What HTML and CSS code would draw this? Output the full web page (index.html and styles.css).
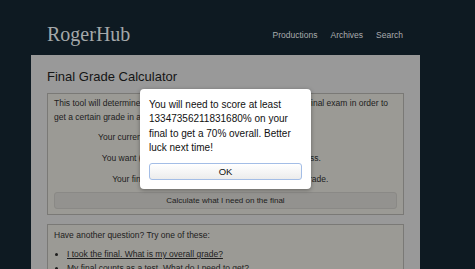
FILE: index.html
```html
<!DOCTYPE html>
<html lang="en">
<head>
  <meta charset="UTF-8">
  <meta name="viewport" content="width=device-width, initial-scale=1.0">
  <title>Final Grade Calculator - RogerHub</title>
  <link rel="stylesheet" href="styles.css">
</head>
<body>

  <div class="site-header">
    <div class="logo">RogerHub</div>
    <div class="nav">
      <a href="#">Productions</a>
      <a href="#">Archives</a>
      <a href="#">Search</a>
    </div>
  </div>

  <div class="page">
    <h1 class="page-title">Final Grade Calculator</h1>

    <div class="calc-box">
      <p class="intro">This tool will determine what percentage you need to score on your final exam in order to get a certain grade in a class.</p>

      <div class="form-rows">
        <label class="row-label">Your current grade is:</label>
        <input class="row-input" type="text" value="">
        <span class="row-suffix">%</span>

        <label class="row-label">You want (at least) a</label>
        <input class="row-input" type="text" value="">
        <span class="row-suffix">% in the class.</span>

        <label class="row-label">Your final is worth</label>
        <input class="row-input" type="text" value="">
        <span class="row-suffix">% of your grade.</span>
      </div>

      <button class="calc-button">Calculate what I need on the final</button>
    </div>

    <div class="calc-box more-box">
      <p class="more-title">Have another question? Try one of these:</p>
      <ul class="more-list">
        <li><a href="#">I took the final. What is my overall grade?</a></li>
        <li><a href="#">My final counts as a test. What do I need to get?</a></li>
      </ul>
    </div>
  </div>

  <!-- alert box on top of the page -->
  <div class="alert-box">
    <p class="alert-text">You will need to score at least 13347356211831680% on your final to get a 70% overall. Better luck next time!</p>
    <button class="alert-ok">OK</button>
  </div>

</body>
</html>
```

FILE: styles.css
```css
body {
  margin: 0;
  background-color: #0e1a22;
  font-family: "Liberation Sans", Arial, sans-serif;
  overflow: hidden;
  height: 269px;
  position: relative;
}

.site-header {
  width: 389px;
  margin-left: 31px;
  box-sizing: border-box;
  height: 55px;
  padding: 22px 17px 0 16px;
  display: flex;
  justify-content: space-between;
  align-items: flex-start;
}

.logo {
  font-family: "Liberation Serif", Georgia, serif;
  font-size: 20px;
  line-height: 24px;
  color: #a4a8aa;
}

.nav {
  margin-top: 8px;
  display: flex;
  gap: 13px;
  font-size: 8.5px;
  line-height: 10px;
}

.nav a {
  color: #a9abad;
  text-decoration: none;
}

.page {
  width: 389px;
  margin-left: 31px;
  box-sizing: border-box;
  min-height: 214px;
  padding: 14px 16px 0;
  background-color: #999999;
}

.page-title {
  margin: 0 0 8px;
  font-size: 13px;
  line-height: 16px;
  font-weight: normal;
  color: #151515;
}

.calc-box {
  border: 1px solid #7a7976;
  background-color: #9b9a95;
  padding: 2px 6px 5px;
  font-size: 8.5px;
  line-height: 14px;
  color: #1d1d1d;
}

.intro {
  margin: 0;
}

.form-rows {
  margin-top: 3px;
  display: grid;
  grid-template-columns: 125px 83px 1fr;
  column-gap: 2px;
  row-gap: 1px;
  align-items: center;
}

.row-label {
  text-align: right;
  line-height: 20px;
}

.row-input {
  height: 14px;
  box-sizing: border-box;
  border: 1px solid #777;
  background: #999;
  font-size: 8px;
}

.row-suffix {
  line-height: 20px;
}

.calc-button {
  display: block;
  width: 100%;
  height: 17px;
  margin-top: 3px;
  padding: 0;
  border: 1px solid #8a8986;
  border-radius: 3px;
  background-color: #93928f;
  font-family: "Liberation Sans", Arial, sans-serif;
  font-size: 8px;
  color: #1d1d1d;
}

.more-box {
  margin-top: 9px;
  padding-top: 3px;
}

.more-title {
  margin: 0;
}

.more-list {
  margin: 5px 0 0;
  padding-left: 13px;
}

.more-list a {
  color: #1d1d1d;
}

.alert-box {
  position: absolute;
  left: 140px;
  top: 89px;
  width: 171px;
  box-sizing: border-box;
  padding: 9px;
  background-color: #ffffff;
  border-radius: 4px;
  box-shadow: 0 1px 4px rgba(0, 0, 0, 0.35);
}

.alert-text {
  margin: 0 0 8px;
  font-size: 10px;
  line-height: 14.3px;
  color: #111111;
}

.alert-ok {
  display: block;
  width: 100%;
  height: 17px;
  padding: 0;
  border: 1px solid #a3bde6;
  border-radius: 3px;
  background: linear-gradient(#ffffff, #ececec);
  font-family: "Liberation Sans", Arial, sans-serif;
  font-size: 9.5px;
  color: #111111;
}
```
